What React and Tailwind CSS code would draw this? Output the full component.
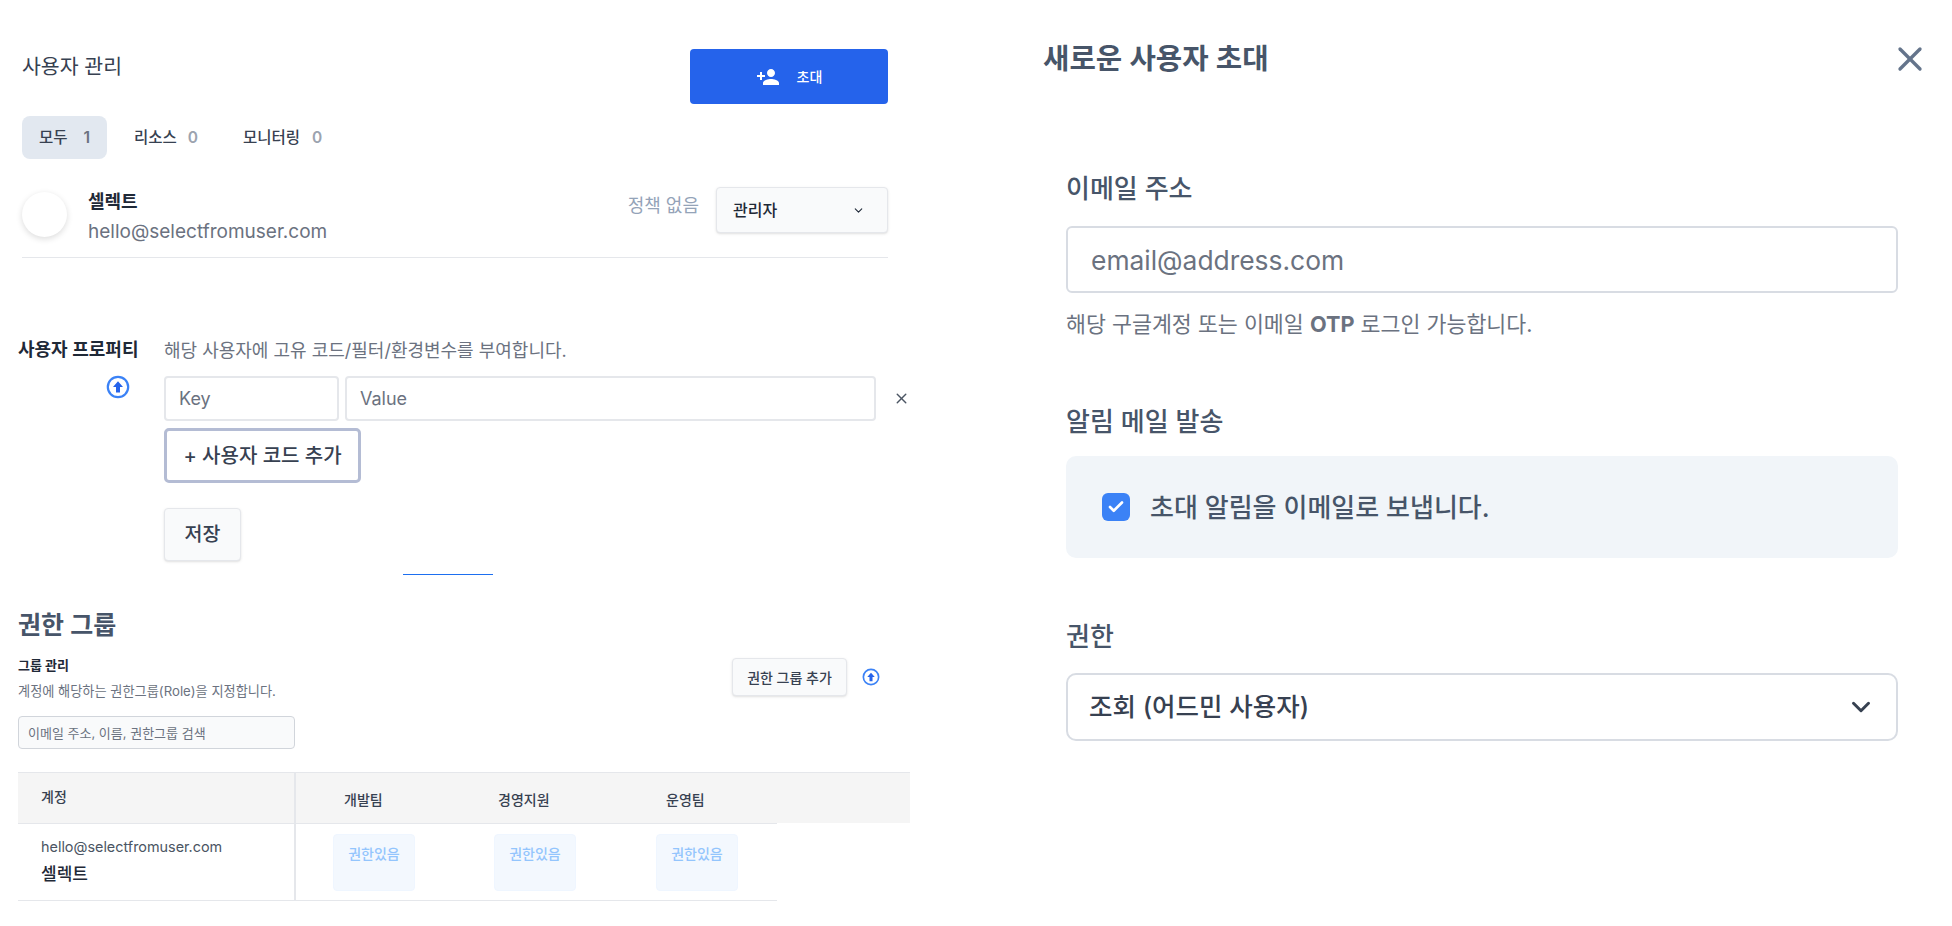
import { ChevronDown, X, Check } from 'lucide-react';
import { MdPersonAdd } from 'react-icons/md';

// Round blue badge with an up arrow, used next to the section actions
const UploadIcon = ({ className }) => (
  <svg className={className} viewBox="0 0 24 24" fill="none">
    <circle cx="12" cy="12" r="10.2" stroke="#3b82f6" strokeWidth="2.2" />
    <path d="M12 6.2 17 12h-3v5.5h-4V12H7z" fill="#2563eb" />
  </svg>
);

const GROUPS = [
  { name: '개발팀', head: 'w-[154px] pl-[48px]', cell: 'w-[198px] pl-[37px]' },
  { name: '경영지원', head: 'w-[168px] pl-[48px]', cell: 'w-[162px]' },
  { name: '운영팀', head: 'w-[150px] pl-[48px]', cell: 'w-[82px]' },
];

const App = () => {
  return (
    <div className="flex h-[926px] w-[1952px] overflow-hidden bg-white font-['Inter','Noto_Sans_CJK_KR',sans-serif]">
      {/* Left: user management page */}
      <div className="w-[1043px] shrink-0 pl-[18px] pt-[49px]">
        <div className="ml-[4px] w-[866px]">
          <div className="flex h-[55px] items-start justify-between">
            <h1 className="mt-[4px] text-[20.5px] leading-[28px] font-normal text-[#374151]">사용자 관리</h1>
            <button className="flex h-[55px] w-[198px] items-center justify-center gap-[17px] rounded-[4px] bg-[#2563eb] text-[14px] font-medium text-white">
              <MdPersonAdd className="h-[24px] w-[24px]" />
              초대
            </button>
          </div>

          {/* Tabs */}
          <div className="mt-[12px] flex h-[43px] items-center text-[15.5px] font-medium text-[#374151]">
            <div className="flex h-[43px] w-[85px] items-center justify-center gap-[16px] rounded-[8px] bg-[#e2e8f0]">
              <span>모두</span>
              <span className="font-semibold text-[#6b7280]">1</span>
            </div>
            <div className="ml-[27px] flex items-center gap-[11px]">
              <span>리소스</span>
              <span className="font-semibold text-[#9ca3af]">0</span>
            </div>
            <div className="ml-[45px] flex items-center gap-[12px]">
              <span>모니터링</span>
              <span className="font-semibold text-[#9ca3af]">0</span>
            </div>
          </div>

          {/* User row */}
          <div className="mt-[28px] flex h-[71px] items-start border-b border-[#e5e7eb]">
            <div className="mt-[5px] h-[45px] w-[45px] rounded-full bg-white shadow-[0_2px_6px_rgba(0,0,0,0.14)]" />
            <div className="ml-[21px] flex flex-col">
              <span className="mt-[3px] text-[18px] leading-[24px] font-semibold text-[#1f2937]">셀렉트</span>
              <span className="mt-[6px] text-[19px] leading-[24px] text-[#6b7280]">hello@selectfromuser.com</span>
            </div>
            <span className="mt-[7px] ml-auto text-[18px] leading-[24px] text-[#94a3b8]">정책 없음</span>
            <div className="ml-[17px] flex h-[46px] w-[172px] items-center justify-between rounded-[4px] border border-[#e5e7eb] bg-[#f9fafb] pl-[16px] pr-[22px] text-[16px] font-medium text-[#1f2937] shadow-sm">
              관리자
              <ChevronDown className="h-[13px] w-[13px]" strokeWidth={2} />
            </div>
          </div>
        </div>

        {/* User properties */}
        <div className="mt-[81px] flex">
          <div className="w-[147px] shrink-0">
            <div className="text-[18px] leading-[22px] font-semibold text-[#1f2937]">사용자 프로퍼티</div>
            <UploadIcon className="mt-[14px] ml-[88px] h-[24px] w-[24px]" />
          </div>
          <div className="w-[760px] -ml-[1px]">
            <p className="text-[18px] leading-[24px] text-[#6b7280]">해당 사용자에 고유 코드/필터/환경변수를 부여합니다.</p>
            <div className="mt-[13px] flex items-center">
              <input placeholder="Key" className="h-[45px] w-[175px] rounded-[4px] border-2 border-[#e5e7eb] px-[13px] text-[18px] placeholder:text-[#6b7280]" />
              <input placeholder="Value" className="ml-[6px] h-[45px] w-[531px] rounded-[4px] border-2 border-[#e5e7eb] px-[13px] text-[18px] placeholder:text-[#6b7280]" />
              <X className="ml-[17px] h-[17px] w-[17px] text-[#4b5563]" strokeWidth={2} />
            </div>
            <button className="mt-[7px] block h-[55px] w-[197px] rounded-[5px] border-[3px] border-[#b4bcd4] bg-white text-[20px] font-medium text-[#374151]">
              + 사용자 코드 추가
            </button>
            <button className="mt-[25px] block h-[53px] w-[77px] rounded-[4px] border border-[#e5e7eb] bg-[#f9fafb] text-[19.5px] font-medium text-[#374151] shadow-sm">
              저장
            </button>
          </div>
        </div>

        <div className="mt-[13px] ml-[385px] h-[1px] w-[90px] bg-[#1d6ff0]" />

        {/* Permission groups */}
        <h2 className="mt-[32px] text-[25px] leading-[36px] font-semibold text-[#475569]">권한 그룹</h2>
        <div className="mt-[15px] flex w-[862px] items-start justify-between">
          <div>
            <div className="-mt-[2px] text-[13px] leading-[18px] font-bold text-[#1f2937]">그룹 관리</div>
            <p className="mt-[8px] text-[13.2px] leading-[18px] text-[#6b7280]">계정에 해당하는 권한그룹(Role)을 지정합니다.</p>
          </div>
          <div className="flex items-center gap-[15px]">
            <button className="h-[38px] w-[115px] rounded-[4px] border border-[#e5e7eb] bg-[#f9fafb] text-[14px] font-medium text-[#374151] shadow-sm">
              권한 그룹 추가
            </button>
            <UploadIcon className="h-[18px] w-[18px]" />
          </div>
        </div>
        <input
          placeholder="이메일 주소, 이름, 권한그룹 검색"
          className="mt-[16px] block h-[33px] w-[277px] rounded-[4px] border border-[#d1d5db] bg-[#f9fafb] px-[9px] text-[13px] placeholder:text-[#6b7280]"
        />

        {/* Table */}
        <div className="mt-[23px] w-[892px]">
          <div className="flex h-[51px] border-t border-[#e5e7eb] bg-[#f5f5f5] text-[14px] font-medium text-[#374151]">
            <div className="w-[278px] shrink-0 border-r-2 border-[#e5e7eb] pl-[23px] pt-[13px]">계정</div>
            <div className="flex pt-[16px]">
              {GROUPS.map((g) => (
                <div key={g.name} className={g.head}>{g.name}</div>
              ))}
            </div>
          </div>
          <div className="flex h-[78px] w-[759px] border-y border-[#e5e7eb]">
            <div className="w-[278px] shrink-0 border-r-2 border-[#e5e7eb] pl-[23px] pt-[13px]">
              <div className="text-[14.4px] leading-[20px] text-[#4b5563]">hello@selectfromuser.com</div>
              <div className="mt-[5px] text-[17px] leading-[24px] font-medium text-[#1f2937]">셀렉트</div>
            </div>
            <div className="flex pt-[10px]">
              {GROUPS.map((g) => (
                <div key={g.name} className={`shrink-0 ${g.cell}`}>
                  <div className="h-[57px] w-[82px] rounded-[4px] border border-[#eff6ff] bg-[#f3f8fe] pt-[8px] text-center text-[14px] font-medium text-[#93c5fd]">
                    권한있음
                  </div>
                </div>
              ))}
            </div>
          </div>
        </div>
      </div>

      {/* Right: invite dialog */}
      <div className="flex-1 pt-[39px]">
        <div className="flex w-[887px] items-start justify-between">
          <h2 className="text-[28.7px] leading-[40px] font-semibold text-[#475569]">새로운 사용자 초대</h2>
          <X className="h-[40px] w-[40px] text-[#64748b]" strokeWidth={2} />
        </div>

        <div className="ml-[23px] w-[832px]">
          <label className="mt-[92px] block text-[26px] leading-[36px] font-medium text-[#475569]">이메일 주소</label>
          <input
            placeholder="email@address.com"
            className="mt-[19px] block h-[67px] w-full rounded-[6px] border-2 border-[#d8dce3] px-[23px] text-[26.4px] placeholder:text-[#6b7280]"
          />
          <p className="mt-[15px] text-[21.7px] leading-[32px] text-[#6b7280]">
            해당 구글계정 또는 이메일 <b className="font-bold">OTP</b> 로그인 가능합니다.
          </p>

          <label className="mt-[64px] block text-[26px] leading-[36px] font-medium text-[#475569]">알림 메일 발송</label>
          <div className="mt-[16px] flex h-[102px] items-center rounded-[10px] bg-[#f1f5f9] pl-[36px]">
            <span className="flex h-[28px] w-[28px] items-center justify-center rounded-[6px] bg-[#3b82f6]">
              <Check className="h-[18px] w-[18px] text-white" strokeWidth={3.5} />
            </span>
            <span className="ml-[20px] text-[26px] font-medium text-[#475569]">초대 알림을 이메일로 보냅니다.</span>
          </div>

          <label className="mt-[61px] block text-[26px] leading-[36px] font-medium text-[#475569]">권한</label>
          <div className="mt-[18px] flex h-[68px] items-center justify-between rounded-[10px] border-2 border-[#d8dce3] pl-[21px] pr-[20px] text-[25.5px] font-medium text-[#374151]">
            조회 (어드민 사용자)
            <ChevronDown className="h-[30px] w-[30px]" strokeWidth={2.4} />
          </div>
        </div>
      </div>
    </div>
  );
};

export default App;
